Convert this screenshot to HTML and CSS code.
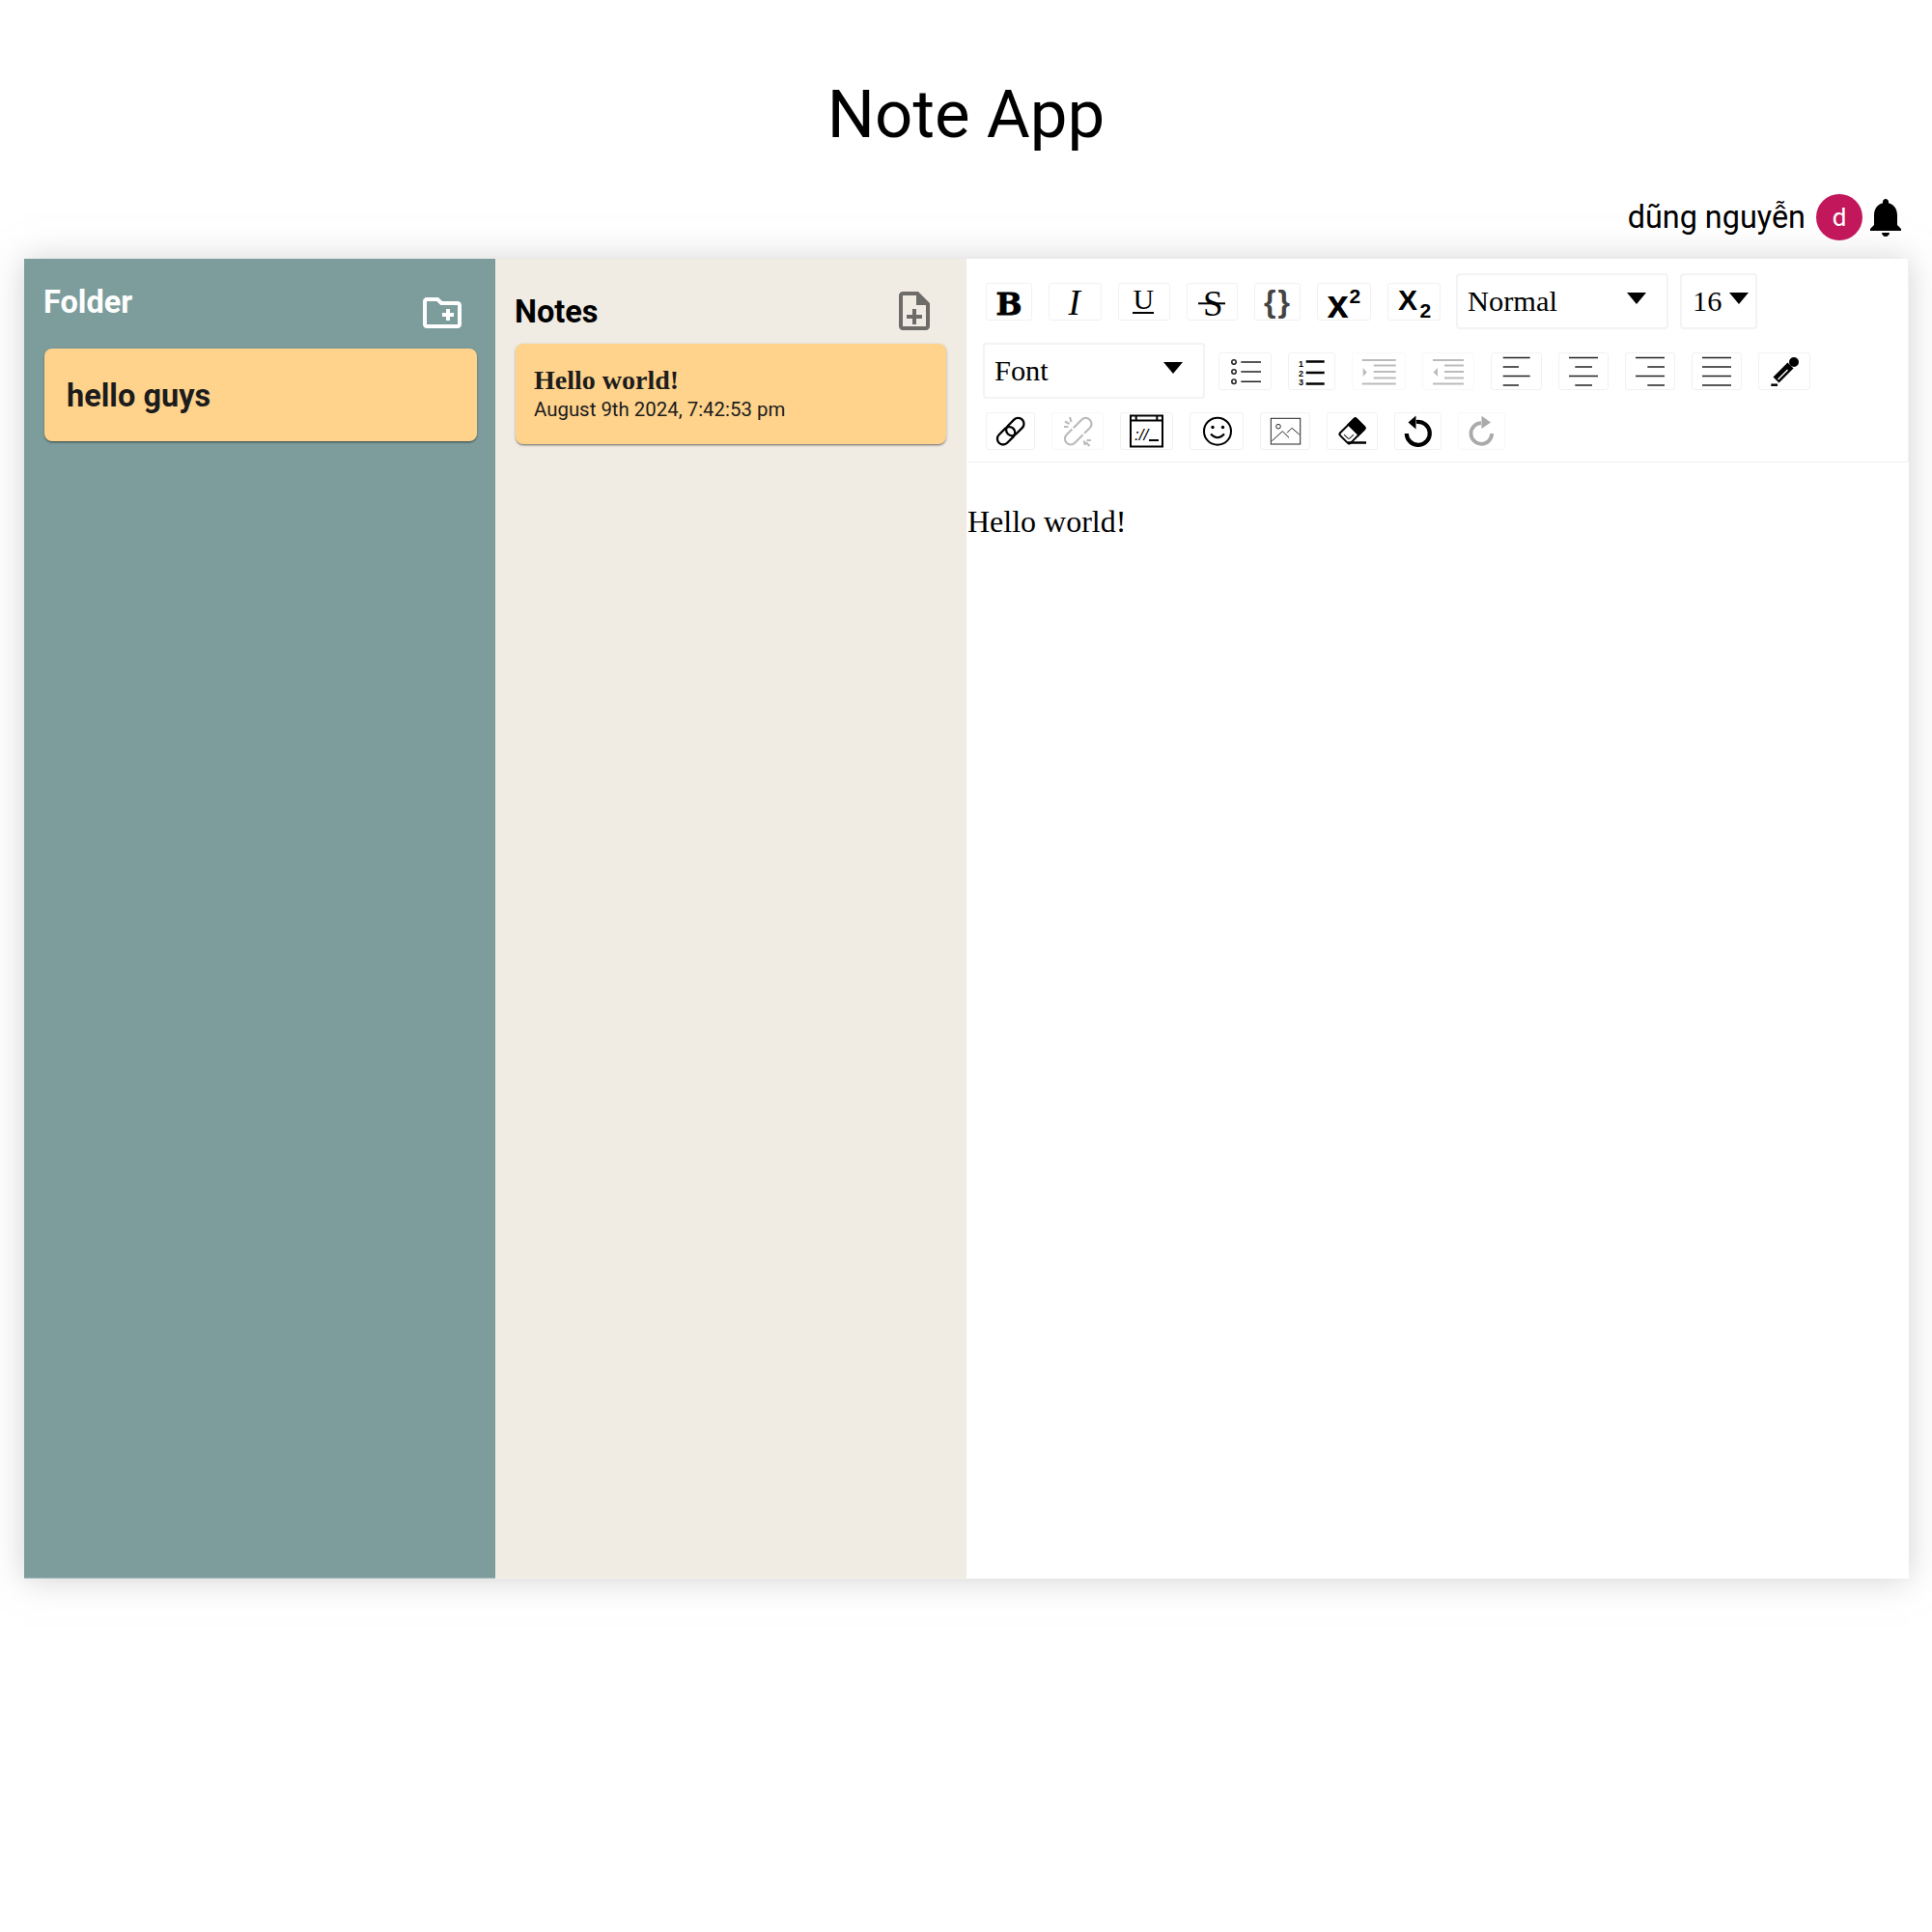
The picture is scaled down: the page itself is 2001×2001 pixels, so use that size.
FILE: index.html
```html
<!DOCTYPE html>
<html lang="en">
<head>
  <meta charset="UTF-8">
  <title>Note App</title>
  <link rel="stylesheet" href="styles.css">
</head>
<body>
  <h1 class="title">Note App</h1>
  <div class="user-row">
    <span class="user-name">dũng nguyễn</span>
    <span class="avatar">d</span>
    <svg class="bell" width="48" height="48" viewBox="0 0 24 24"><path d="M12 22c1.1 0 2-.9 2-2h-4c0 1.1.89 2 2 2zm6-6v-5c0-3.07-1.64-5.64-4.5-6.32V4c0-.83-.67-1.5-1.5-1.5s-1.5.67-1.5 1.5v.68C7.63 5.36 6 7.92 6 11v5l-2 2v1h16v-1l-2-2z"/></svg>
  </div>

  <main class="board">
    <!-- folders -->
    <section class="folders">
      <div class="folders-head">
        <span class="head-text">Folder</span>
        <svg class="add-folder" width="48" height="48" viewBox="0 0 24 24"><path d="M20 6h-8l-2-2H4c-1.11 0-1.99.89-1.99 2L2 18c0 1.11.89 2 2 2h16c1.11 0 2-.89 2-2V8c0-1.11-.89-2-2-2zm0 12H4V6h5.17l2 2H20v10zm-8-4h2v2h2v-2h2v-2h-2v-2h-2v2h-2z"/></svg>
      </div>
      <div class="folder-card">hello guys</div>
    </section>

    <!-- notes -->
    <section class="notes">
      <div class="notes-head">
        <span class="head-text">Notes</span>
        <svg class="add-note" width="48" height="48" viewBox="0 0 24 24"><path d="M13 11h-2v3H8v2h3v3h2v-3h3v-2h-3zm1-9H6c-1.1 0-2 .9-2 2v16c0 1.1.89 2 1.99 2H18c1.1 0 2-.9 2-2V8l-6-6zm4 18H6V4h7v5h5v11z"/></svg>
      </div>
      <div class="note-card">
        <div class="note-title">Hello world!</div>
        <div class="note-date">August 9th 2024, 7:42:53 pm</div>
      </div>
    </section>

    <!-- editor -->
    <section class="editor">
      <div class="toolbar">
        <div class="tool-row">
          <span class="btn"><svg width="32" height="37" viewBox="0 0 32 37"><text class="g-b" x="2.5" y="32">B</text></svg></span>
          <span class="btn"><svg width="39" height="37" viewBox="0 0 39 37"><text class="g-i" x="12.5" y="32">I</text></svg></span>
          <span class="btn"><svg width="38" height="37" viewBox="0 0 38 37"><text class="g-u" x="7.5" y="26">U</text><rect x="7" y="29" width="22" height="2"/></svg></span>
          <span class="btn"><svg width="37" height="37" viewBox="0 0 37 37"><text class="g-s" x="9" y="32.5">S</text><rect x="4" y="19.3" width="28" height="2"/></svg></span>
          <span class="btn"><svg width="32" height="37" viewBox="0 0 32 37"><text class="g-c" x="2" y="28.5">{</text><text class="g-c" x="16.5" y="28.5">}</text></svg></span>
          <span class="btn"><svg width="40" height="37" viewBox="0 0 40 37"><text class="g-x" x="2.5" y="34.5">x</text><text class="g-n" x="25.5" y="20.3">2</text></svg></span>
          <span class="btn"><svg width="39" height="37" viewBox="0 0 39 37"><text class="g-x2" x="3" y="27">X</text><text class="g-n" x="25.5" y="34.7">2</text></svg></span>
          <div class="drop drop-block"><span>Normal</span><i class="caret"></i></div>
          <div class="drop drop-size"><span>16</span><i class="caret"></i></div>
        </div>
        <div class="tool-row">
          <div class="drop drop-font"><span>Font</span><i class="caret"></i></div>
          <span class="btn"><svg width="39" height="37" viewBox="0 0 39 37"><g class="ln ln-thin"><circle cx="8" cy="9" r="2.2"/><circle cx="8" cy="19" r="2.2"/><circle cx="8" cy="29.3" r="2.2"/><path d="M15.3 9H36M15.3 19H36M15.3 29.3H36"/></g></svg></span>
          <span class="btn"><svg width="33" height="37" viewBox="0 0 33 37"><text class="g-num" x="3" y="13.7">1</text><text class="g-num" x="3" y="23.5">2</text><text class="g-num" x="3" y="33">3</text><g class="ln ln-fat"><path d="M10.7 8.5H29.7M10.7 20H29.7M10.7 31.5H29.7"/></g></svg></span>
          <span class="btn off"><svg width="40" height="37" viewBox="0 0 40 37"><g class="ln ln-off"><path d="M2.7 7H37.7M14.7 12.5H37.7M14.7 19H37.7M14.7 25.5H37.7M2.7 31.5H37.7"/></g><path class="fill-off" d="M3.7 15L7.7 19.5L3.7 24z"/></svg></span>
          <span class="btn off"><svg width="38" height="37" viewBox="0 0 38 37"><g class="ln ln-off"><path d="M3 7H35M15 12.5H35M15 19H35M15 25.5H35M3 31.5H35"/></g><path class="fill-off" d="M8 15L3.5 19.5L8 24z"/></svg></span>
          <span class="btn"><svg width="37" height="37" viewBox="0 0 37 37"><g class="ln ln-thin"><path d="M4.7 4.5H32.7M4.7 14H21M4.7 23.5H32.7M4.7 33H21"/></g></svg></span>
          <span class="btn"><svg width="36" height="37" viewBox="0 0 36 37"><g class="ln ln-thin"><path d="M3 4.5H33M9.3 14H27M3 23.5H33M9.3 33H27"/></g></svg></span>
          <span class="btn"><svg width="36" height="37" viewBox="0 0 36 37"><g class="ln ln-thin"><path d="M3 4.5H33M15.3 14H33M3 23.5H33M15.3 33H33"/></g></svg></span>
          <span class="btn"><svg width="36" height="37" viewBox="0 0 36 37"><g class="ln ln-thin"><path d="M3 4.5H33M3 14H33M3 23.5H33M3 33H33"/></g></svg></span>
          <span class="btn"><svg width="38" height="37" viewBox="0 0 38 37"><circle cx="29" cy="9" r="5"/><path class="ln-drop" d="M25.5 12.5L10.5 27.5"/><path class="ln-drop-in" d="M22.5 17L12.5 27"/><path class="ln ln-fat" d="M5.3 32.7H12"/></svg></span>
        </div>
        <div class="tool-row">
          <span class="btn"><svg width="35" height="37" viewBox="0 0 35 37"><g class="ln ln-link" transform="translate(17.7 18.7) rotate(-45)"><rect x="-17" y="-6" width="21" height="12" rx="6"/><rect x="-4" y="-6" width="21" height="12" rx="6"/></g></svg></span>
          <span class="btn off"><svg width="38" height="37" viewBox="0 0 38 37"><g class="ln ln-link ln-off" transform="translate(19.7 18.7) rotate(-45)"><path d="M-1 -6H11a6 6 0 0 1 0 12H3"/><path d="M1 6H-11a6 6 0 0 1 0 -12H-3"/></g><path class="ln ln-off ln-thin" d="M6 8.5L10.5 11M11 4L12.5 9M5 14H9.5M27 33L25.5 28.5M33 28H28.5M31.5 34L27.5 30"/></svg></span>
          <span class="btn"><svg width="39" height="37" viewBox="0 0 39 37"><g class="ln"><rect x="3" y="2.5" width="33" height="32"/><path d="M3 7.5H36M8.7 2.5V7.5M30.3 2.5V7.5M22 28H32"/></g><text class="g-code" x="7" y="28">://</text></svg></span>
          <span class="btn"><svg width="40" height="37" viewBox="0 0 40 37"><g class="ln"><circle cx="21" cy="18.7" r="14"/><path d="M14 21.5Q21 29 28 21.5"/></g><circle cx="16" cy="14.5" r="1.7"/><circle cx="26.5" cy="14.5" r="1.7"/></svg></span>
          <span class="btn"><svg width="36" height="37" viewBox="0 0 36 37"><g class="ln ln-hair"><rect x="3.3" y="5.3" width="30.4" height="26.7"/><circle cx="11" cy="13.7" r="2.3"/><path d="M4.3 28.7L15.3 18.7L22 25.3M20 20.3L25 15.3L32.7 22"/></g></svg></span>
          <span class="btn"><svg width="37" height="37" viewBox="0 0 37 37"><g transform="translate(18.5 18.5) rotate(-45)"><rect class="ln" x="-12" y="-7.5" width="24" height="15" rx="2"/><path d="M1 -8.5H10.5a2.5 2.5 0 0 1 2.5 2.5V6a2.5 2.5 0 0 1 -2.5 2.5H1z"/><path class="ln ln-hair" d="M-1.5 3.5H-7a1.5 1.5 0 0 1 -1.5 -1.5V-3.5"/></g><path class="ln ln-fat" d="M14 30.5H33"/></svg></span>
          <span class="btn"><svg width="33" height="37" viewBox="0 0 33 37"><path class="ln ln-arc" d="M15 9A12 12 0 1 1 4.8 21"/><path d="M6.5 9.5L14.5 2.5V16.5z"/></svg></span>
          <span class="btn off"><svg width="33" height="37" viewBox="0 0 33 37"><path class="ln ln-arc ln-redo" d="M16 10.2A10.8 10.8 0 1 0 27.1 21"/><path class="fill-redo" d="M26 9.5L16.5 2.7V16z"/></svg></span>
        </div>
      </div>
      <p class="editor-text">Hello world!</p>
    </section>
  </main>
</body>
</html>
```

FILE: styles.css
```css
body { margin: 0; min-height: 100vh; background: #fff; color: #000; font-family: Roboto, sans-serif; }
.title { margin: 0; padding-top: 77px; font-size: 69px; font-weight: 400; line-height: 84px; text-align: center; }

.user-row { display: flex; justify-content: flex-end; align-items: center; margin-top: 40px; padding-right: 24px; height: 48px; }
.user-name { font-size: 32.4px; margin-right: 11px; }
.avatar { width: 48px; height: 48px; border-radius: 50%; background: #c2185b; color: #fff; font-size: 26px; display: flex; align-items: center; justify-content: center; }

.board { display: grid; grid-template-columns: 488px 488px 976px; width: 1952px; height: 1367px; margin: 19px 0 0 25px; background: #fff; box-shadow: 0 1px 32px 0 rgba(180, 180, 180, 0.6); }
.folders { background: #7d9d9c; padding: 0 19px 0 21px; border-bottom: 1px solid #a5bbba; }
.notes { background: #f0ebe3; padding: 0 21px 0 21px; border-bottom: 1px solid #f6f3ee; }

.folders-head { display: flex; justify-content: space-between; align-items: flex-start; height: 93px; padding: 26px 12px 0 0; box-sizing: border-box; color: #fff; }
.notes-head { display: flex; justify-content: space-between; align-items: center; height: 88px; padding: 20px 9px 0 0; box-sizing: border-box; }
.head-text { font-size: 32.5px; font-weight: 700; margin-left: -1px; }
.notes-head .head-text { margin-top: 2px; }
.add-folder { margin-top: 6px; fill: #fff; }
.add-note { fill: rgba(0, 0, 0, 0.54); }

.folder-card, .note-card { background: rgb(255, 211, 140); border-radius: 8px; color: #1c1c1c; box-shadow: 0 2px 2px -1px rgba(0, 0, 0, 0.4), 0 1px 3px 0 rgba(0, 0, 0, 0.25); }
.folder-card { height: 96px; box-sizing: border-box; padding: 2px 0 0 23px; display: flex; align-items: center; font-size: 32.5px; font-weight: 700; }
.note-card { height: 104px; padding: 22px 0 0 19px; box-sizing: border-box; }
.note-title { font-family: "Liberation Serif", serif; font-size: 28px; font-weight: 700; line-height: 32px; }
.note-date { font-size: 20.4px; line-height: 28px; }

.editor { background: #fff; min-width: 0; }
.toolbar { margin-left: 1px; padding: 15px 0 12px 10.5px; border-bottom: 1px solid #f1f1f1; border-right: 1px solid #f1f1f1; border-radius: 3px; display: flex; flex-direction: column; gap: 14px; font-family: "Liberation Serif", serif; }
.tool-row { display: flex; align-items: center; }

.btn { display: flex; box-sizing: border-box; padding: 0 7px; height: 39px; margin: 0 8.5px; border: 1px solid #f1f1f1; border-radius: 3px; background: #fff; }
.btn.off { border-color: #f8f8f8; }
.btn svg { display: block; overflow: visible; }

.drop { display: flex; justify-content: space-between; align-items: center; box-sizing: border-box; height: 58px; margin: 0 6.5px; padding: 0 21px 0 10px; border: 2px solid #f3f3f3; border-radius: 4px; font-size: 30.4px; }
.drop-block { width: 220px; margin-left: 7.5px; }
.drop-size { width: 80px; padding: 0 7px 0 11px; margin-left: 5.5px; }
.drop-font { width: 230px; margin: 0 5.5px; }
.caret { width: 0; height: 0; margin-top: -7px; border-top: 12px solid #000; border-left: 10px solid transparent; border-right: 10px solid transparent; }

.ln { fill: none; stroke: #000; stroke-width: 2; }
.ln-fat { stroke-width: 2.5; }
.ln-thin { stroke: #222; stroke-width: 1.5; }
.ln-hair { stroke: #222; stroke-width: 1; }
.ln-link { stroke-width: 2.3; }
.ln-off { stroke: #bbb; stroke-width: 2.2; }
.ln-arc { stroke-width: 4.2; }
.ln-redo { stroke: #aaa; stroke-width: 3.8; }
.fill-off { fill: #bbb; }
.fill-redo { fill: #aaa; }
.ln-drop { stroke: #000; stroke-width: 8.5; fill: none; }
.ln-drop-in { stroke: #fff; stroke-width: 1.5; fill: none; }

.g-b { font-family: "DejaVu Serif", serif; font-weight: 700; font-size: 32px; stroke: #000; stroke-width: 0.8; }
.g-i { font-family: "Liberation Serif", serif; font-style: italic; font-size: 37px; }
.g-u { font-family: "Liberation Serif", serif; font-size: 30px; }
.g-s { font-family: "Liberation Serif", serif; font-size: 37px; }
.g-c { font-family: "Liberation Sans", sans-serif; font-weight: 700; font-size: 32px; fill: #444; }
.g-x { font-family: "Liberation Sans", sans-serif; font-weight: 700; font-size: 40px; }
.g-x2 { font-family: "Liberation Sans", sans-serif; font-weight: 700; font-size: 30px; }
.g-n { font-family: "Liberation Sans", sans-serif; font-weight: 700; font-size: 21px; }
.g-num { font-family: "Liberation Sans", sans-serif; font-weight: 700; font-size: 9px; }
.g-code { font-family: "Liberation Sans", sans-serif; font-style: italic; font-size: 17px; }

.editor-text { margin: 43px 0 0 1px; font-family: "Liberation Serif", serif; font-size: 32px; }
```
